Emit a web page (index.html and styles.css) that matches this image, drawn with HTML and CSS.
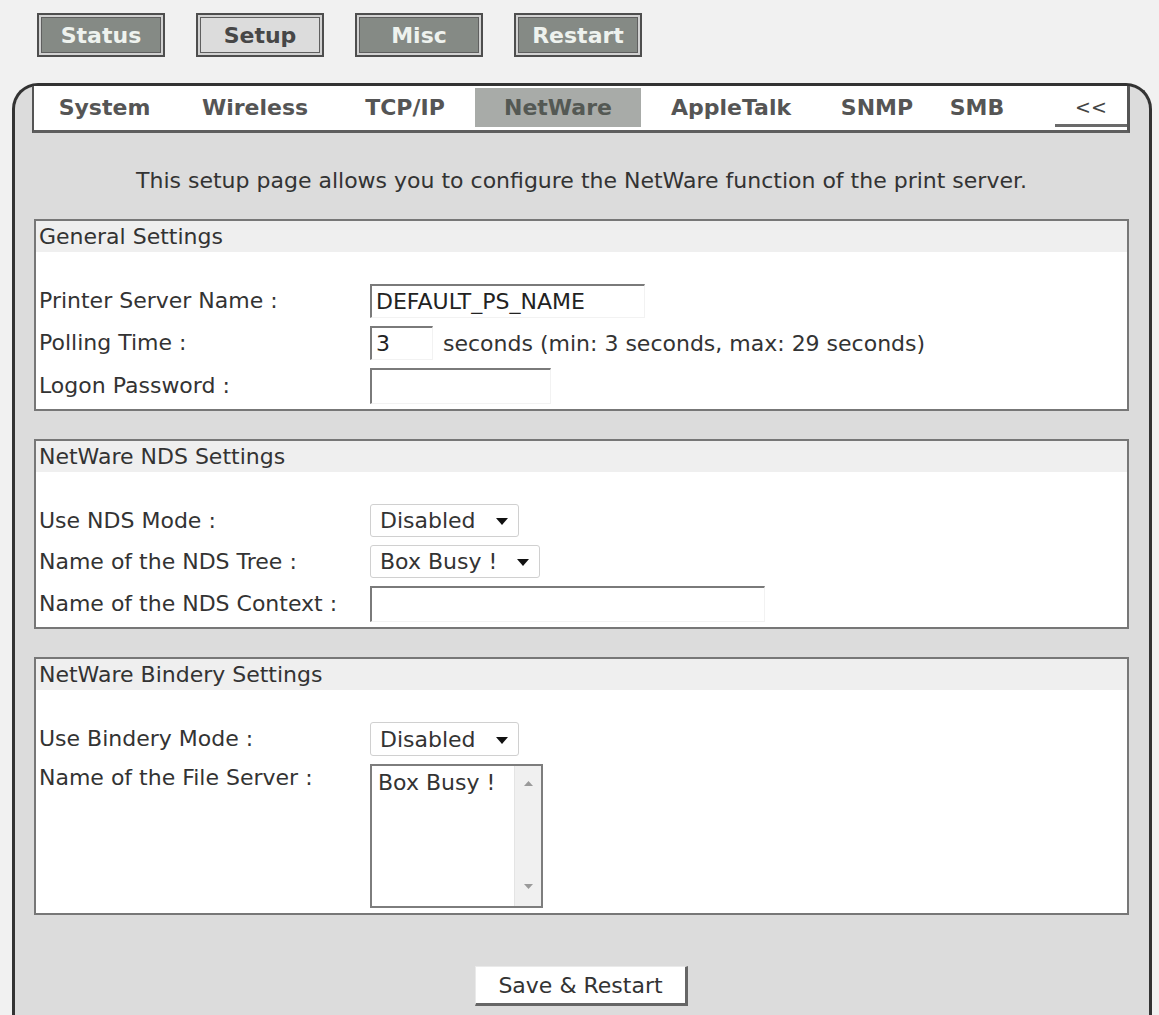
FILE: index.html
```html
<!DOCTYPE html>
<html lang="en">
<head>
<meta charset="utf-8">
<title>Print Server - NetWare Setup</title>
<link rel="stylesheet" href="styles.css">
</head>
<body>
<nav class="topnav">
  <a class="topbtn">Status</a>
  <a class="topbtn current">Setup</a>
  <a class="topbtn">Misc</a>
  <a class="topbtn">Restart</a>
</nav>

<div class="panel">
  <div class="tabbar">
    <span class="tab">System</span>
    <span class="tab">Wireless</span>
    <span class="tab">TCP/IP</span>
    <span class="tab active">NetWare</span>
    <span class="tab">AppleTalk</span>
    <span class="tab">SNMP</span>
    <span class="tab">SMB</span>
    <span class="spacer"></span>
    <span class="tab back">&lt;&lt;</span>
  </div>

  <p class="intro">This setup page allows you to configure the NetWare function of the print server.</p>

  <div class="group">
    <div class="group-head">General Settings</div>
    <div class="group-body">
      <span class="lbl">Printer Server Name :</span>
      <div class="ctl"><input class="txt w-name" type="text" value="DEFAULT_PS_NAME"></div>
      <span class="lbl">Polling Time :</span>
      <div class="ctl"><input class="txt w-poll" type="text" value="3"><span class="hint">seconds (min: 3 seconds, max: 29 seconds)</span></div>
      <span class="lbl">Logon Password :</span>
      <div class="ctl"><input class="txt w-pass tall" type="password" value=""></div>
    </div>
  </div>

  <div class="group">
    <div class="group-head">NetWare NDS Settings</div>
    <div class="group-body">
      <span class="lbl">Use NDS Mode :</span>
      <div class="ctl"><div class="sel"><span>Disabled</span><svg class="caret" width="12" height="7" viewBox="0 0 12 7"><path d="M0 0H12L6 7Z" fill="#111"/></svg></div></div>
      <span class="lbl">Name of the NDS Tree :</span>
      <div class="ctl"><div class="sel"><span>Box Busy !</span><svg class="caret" width="12" height="7" viewBox="0 0 12 7"><path d="M0 0H12L6 7Z" fill="#111"/></svg></div></div>
      <span class="lbl">Name of the NDS Context :</span>
      <div class="ctl"><input class="txt w-ctx tall" type="text" value=""></div>
    </div>
  </div>

  <div class="group">
    <div class="group-head">NetWare Bindery Settings</div>
    <div class="group-body">
      <span class="lbl">Use Bindery Mode :</span>
      <div class="ctl"><div class="sel sel-b"><span>Disabled</span><svg class="caret" width="12" height="7" viewBox="0 0 12 7"><path d="M0 0H12L6 7Z" fill="#111"/></svg></div></div>
      <span class="lbl top">Name of the File Server :</span>
      <div class="ctl">
        <div class="listbox">
          <div class="list-items"><div class="opt">Box Busy !</div></div>
          <div class="vscroll">
            <svg width="9" height="5" viewBox="0 0 9 5"><path d="M0 5L4.5 0L9 5Z" fill="#9a9a9a"/></svg>
            <svg width="9" height="5" viewBox="0 0 9 5"><path d="M0 0H9L4.5 5Z" fill="#9a9a9a"/></svg>
          </div>
        </div>
      </div>
    </div>
  </div>

  <div class="actions">
    <button class="save" type="button">Save &amp; Restart</button>
  </div>
</div>
</body>
</html>
```

FILE: styles.css
```css
html, body {
  margin: 0;
  padding: 0;
  overflow: hidden;
}

body {
  background: #f1f1f1;
  font-family: "DejaVu Sans", Verdana, sans-serif;
  font-size: 22px;
  color: #333;
}

/* ---------- top navigation ---------- */
.topnav {
  display: flex;
  gap: 31px;
  padding: 13px 0 0 37px;
}

.topbtn {
  box-sizing: border-box;
  width: 128px;
  height: 44px;
  display: flex;
  align-items: center;
  justify-content: center;
  font-weight: bold;
  color: #eef2ee;
  background: #858a85;
  border: 2px solid #4e4e4e;
  box-shadow: inset 0 0 0 2px #d2d2d2, inset 0 0 0 3px #5f5f5f;
}

.topbtn.current {
  background: #dcdcdc;
  color: #474747;
}

/* ---------- main panel ---------- */
.panel {
  margin: 26px 7px 0 12px;
  background: #dcdcdc;
  border: 3px solid #333;
  border-bottom: none;
  border-radius: 26px 26px 0 0;
  padding: 0 20px 40px 19px;
}

.tabbar {
  display: grid;
  grid-template-columns: 141px 160px 140px 166px 180px 112px 88px 1fr 72px;
  margin: 0 -1px 0 -2px;
  height: 42px;
  padding-top: 2px;
  box-sizing: content-box;
  background: #fff;
  border-left: 2px solid #555;
  border-right: 3px solid #555;
  border-bottom: 3px solid #5e5e5e;
}

.tab {
  height: 39px;
  display: flex;
  align-items: center;
  justify-content: center;
  font-weight: bold;
  color: #555;
}

.tab.active {
  background: #a8aba8;
  color: #545954;
}

.tab.back {
  font-weight: normal;
  font-size: 19px;
  color: #444;
  height: 34px;
  padding-top: 2px;
  border-bottom: 3px solid #6a6a6a;
}

/* ---------- intro ---------- */
.intro {
  margin: 35px 0 25px;
  text-align: center;
  line-height: 26px;
  color: #333;
}

/* ---------- groups ---------- */
.group {
  background: #fff;
  border: 2px solid #777;
}

.group + .group {
  margin-top: 28px;
}

.group-head {
  height: 31px;
  line-height: 31px;
  padding-left: 3px;
  background: #efefef;
  color: #333;
}

.group-body {
  display: grid;
  grid-template-columns: 331px 1fr;
  row-gap: 8px;
  align-items: center;
  padding: 32px 0 5px 3px;
}

.lbl {
  line-height: 28px;
  color: #333;
}

.lbl.top {
  align-self: start;
}

.ctl {
  display: flex;
  align-items: center;
}

.txt {
  box-sizing: border-box;
  height: 34px;
  margin: 0;
  padding: 0 4px;
  font: inherit;
  color: #222;
  background: #fff;
  border-style: solid;
  border-width: 2px 1px 1px 2px;
  border-color: #7a7a7a #f2f2f2 #f2f2f2 #7a7a7a;
  outline: none;
}

.txt.tall { height: 36px; }
.w-name { width: 275px; }
.w-poll { width: 63px; }
.w-pass { width: 181px; }
.w-ctx  { width: 395px; }

.hint {
  margin-left: 10px;
  color: #333;
}

.sel {
  box-sizing: border-box;
  height: 33px;
  display: flex;
  align-items: center;
  gap: 20px;
  padding: 0 10px 0 9px;
  border: 1px solid #d0d0d0;
  border-radius: 3px;
  background: #fff;
  color: #333;
}

.sel-b { height: 34px; }

.caret { display: block; margin-top: 2px; }

.listbox {
  box-sizing: border-box;
  width: 173px;
  height: 144px;
  display: flex;
  border: 2px solid #7d7d7d;
  background: #fff;
}

.list-items {
  flex: 1;
  padding: 3px 0 0 6px;
}

.opt {
  line-height: 28px;
  color: #333;
}

.vscroll {
  width: 26px;
  background: #f0f0f0;
  border-left: 1px solid #e4e4e4;
  display: flex;
  flex-direction: column;
  justify-content: space-between;
  align-items: center;
  padding: 15px 0 17px;
}

.vscroll svg { display: block; }

/* ---------- actions ---------- */
.actions {
  display: flex;
  justify-content: center;
  padding-top: 51px;
}

.save {
  box-sizing: border-box;
  width: 213px;
  height: 40px;
  margin: 0;
  padding: 0;
  font: inherit;
  color: #333;
  background: #fff;
  border-style: solid;
  border-width: 1px 3px 3px 1px;
  border-color: #eaeaea #666 #666 #eaeaea;
}
```
